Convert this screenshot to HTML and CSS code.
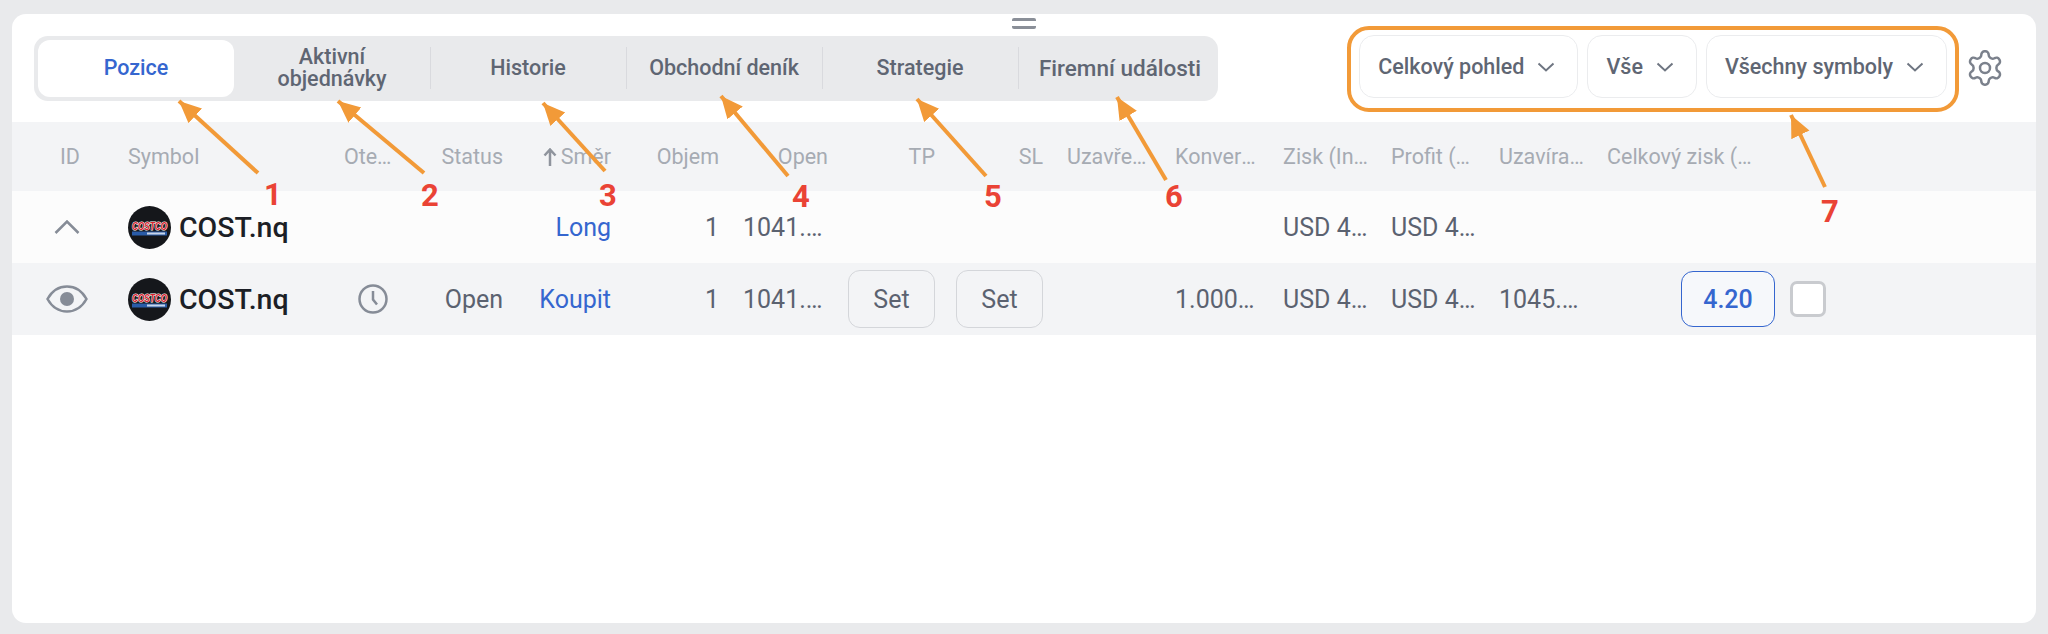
FILE: index.html
```html
<!DOCTYPE html>
<html lang="en">
<head>
    <meta charset="UTF-8">
    <meta name="viewport" content="width=device-width, initial-scale=1.0">
    <title>Pozice</title>
    <link rel="stylesheet" href="styles.css">
</head>
<body>

<svg class="defs" width="0" height="0">
    <symbol id="costco" viewBox="0 0 43 43">
        <circle cx="21.5" cy="21.5" r="21.5" fill="#15171b"/>
        <rect x="4" y="25.500" width="35" height="4" fill="#2a5ca8"/>
        <rect x="19" y="26.500" width="18" height="2" fill="#c9d5e8"/>
        <text x="21.5" y="23.500" textLength="35" lengthAdjust="spacingAndGlyphs" class="logo-text">COSTCO</text>
    </symbol>
</svg>

<div class="card">
    <!-- Drag handle -->
    <div class="handle"></div>

    <div class="toolbar">
        <div class="tabs">
            <div class="tab active">Pozice</div>
            <div class="tab">Aktivní objednávky</div>
            <div class="tab">Historie</div>
            <div class="tab">Obchodní deník</div>
            <div class="tab">Strategie</div>
            <div class="tab">Firemní události</div>
        </div>

        <div class="filters">
            <div class="dropdown">Celkový pohled
                <svg class="chevron" viewBox="0 0 18 10"><path d="M1.5 1.5 9 8.5l7.5-7"/></svg>
            </div>
            <div class="dropdown">Vše
                <svg class="chevron" viewBox="0 0 18 10"><path d="M1.5 1.5 9 8.5l7.5-7"/></svg>
            </div>
            <div class="dropdown">Všechny symboly
                <svg class="chevron" viewBox="0 0 18 10"><path d="M1.5 1.5 9 8.5l7.5-7"/></svg>
            </div>
        </div>

        <svg class="gear" viewBox="0 0 24 24">
            <path d="M12.22 2h-.44a2 2 0 0 0-2 2v.18a2 2 0 0 1-1 1.73l-.43.25a2 2 0 0 1-2 0l-.15-.08a2 2 0 0 0-2.73.73l-.22.38a2 2 0 0 0 .73 2.73l.15.1a2 2 0 0 1 1 1.72v.51a2 2 0 0 1-1 1.74l-.15.09a2 2 0 0 0-.73 2.73l.22.38a2 2 0 0 0 2.73.73l.15-.08a2 2 0 0 1 2 0l.43.25a2 2 0 0 1 1 1.73V20a2 2 0 0 0 2 2h.44a2 2 0 0 0 2-2v-.18a2 2 0 0 1 1-1.73l.43-.25a2 2 0 0 1 2 0l.15.08a2 2 0 0 0 2.73-.73l.22-.39a2 2 0 0 0-.73-2.73l-.15-.08a2 2 0 0 1-1-1.74v-.5a2 2 0 0 1 1-1.74l.15-.09a2 2 0 0 0 .73-2.73l-.22-.38a2 2 0 0 0-2.73-.73l-.15.08a2 2 0 0 1-2 0l-.43-.25a2 2 0 0 1-1-1.73V4a2 2 0 0 0-2-2z"/>
            <circle cx="12" cy="12" r="3"/>
        </svg>
    </div>

    <div class="row head">
        <div class="cell center id-head">ID</div>
        <div class="cell">Symbol</div>
        <div class="cell">Otevřeno</div>
        <div class="cell right">Status</div>
        <div class="cell right sort">
            <svg class="sort-arrow" viewBox="0 0 14 18"><path d="M7 18V2M1.5 7.5 7 1.5l5.500 6"/></svg>Směr
        </div>
        <div class="cell right">Objem</div>
        <div class="cell right open-head">Open</div>
        <div class="cell right">TP</div>
        <div class="cell right">SL</div>
        <div class="cell">Uzavřeno</div>
        <div class="cell">Konverze</div>
        <div class="cell">Zisk (Instrument)</div>
        <div class="cell">Profit (USD)</div>
        <div class="cell">Uzavírací cena</div>
        <div class="cell total-head">Celkový zisk (USD)</div>
    </div>

    <div class="row parent">
        <div class="cell center">
            <svg class="toggle" viewBox="0 0 26 14"><path d="M1.500 13 13 1.500 24.500 13"/></svg>
        </div>
        <div class="cell symbol">
            <svg class="logo"><use href="#costco"/></svg>COST.nq
        </div>
        <div class="cell"></div>
        <div class="cell"></div>
        <div class="cell right blue">Long</div>
        <div class="cell right">1</div>
        <div class="cell">1041.35</div>
        <div class="cell"></div>
        <div class="cell"></div>
        <div class="cell"></div>
        <div class="cell"></div>
        <div class="cell">USD 4.20</div>
        <div class="cell">USD 4.20</div>
        <div class="cell"></div>
        <div class="cell"></div>
    </div>

    <div class="row child">
        <div class="cell center">
            <svg class="eye" viewBox="0 0 42 28">
                <path d="M1.500 14C6 6 13 1.500 21 1.500S36 6 40.500 14C36 22 29 26.500 21 26.500S6 22 1.500 14z"/>
                <circle class="pupil" cx="21" cy="14" r="7"/>
            </svg>
        </div>
        <div class="cell symbol">
            <svg class="logo"><use href="#costco"/></svg>COST.nq
        </div>
        <div class="cell center clock-cell">
            <svg class="clock" viewBox="0 0 30 30">
                <circle cx="15" cy="15" r="13.500"/>
                <path d="M15 7v8.500l4 5"/>
            </svg>
        </div>
        <div class="cell right">Open</div>
        <div class="cell right blue">Koupit</div>
        <div class="cell right">1</div>
        <div class="cell">1041.35</div>
        <div class="cell btn-cell"><button class="set">Set</button></div>
        <div class="cell btn-cell"><button class="set">Set</button></div>
        <div class="cell"></div>
        <div class="cell">1.00000</div>
        <div class="cell">USD 4.20</div>
        <div class="cell">USD 4.20</div>
        <div class="cell">1045.55</div>
        <div class="cell total-cell">
            <button class="total">4.20</button>
            <span class="checkbox"></span>
        </div>
    </div>
</div>

<!-- Annotations drawn on top of the screenshot -->
<svg class="notes" viewBox="0 0 2048 634">
    <defs>
        <marker id="tip" markerUnits="userSpaceOnUse" markerWidth="26" markerHeight="26" refX="22" refY="10" orient="auto">
            <path d="M0 0 22 10 0 20z" fill="#f29a38"/>
        </marker>
    </defs>
    <line x1="258" y1="173" x2="179" y2="101" marker-end="url(#tip)"/>
    <line x1="424" y1="173" x2="338" y2="101" marker-end="url(#tip)"/>
    <line x1="605" y1="171" x2="543" y2="103" marker-end="url(#tip)"/>
    <line x1="788" y1="176" x2="721" y2="96" marker-end="url(#tip)"/>
    <line x1="986" y1="176" x2="917" y2="99" marker-end="url(#tip)"/>
    <line x1="1166" y1="180" x2="1117" y2="97" marker-end="url(#tip)"/>
    <line x1="1825" y1="187" x2="1791" y2="115" marker-end="url(#tip)"/>
    <text x="273" y="205">1</text>
    <text x="430" y="206">2</text>
    <text x="608" y="206">3</text>
    <text x="801" y="207">4</text>
    <text x="993" y="207">5</text>
    <text x="1174" y="207">6</text>
    <text x="1830" y="222">7</text>
</svg>

</body>
</html>
```

FILE: styles.css
```css
* {
    box-sizing: border-box;
}

body {
    margin: 0;
    height: 634px;
    padding: 14px 12px 11px;
    background-color: #e9eaec;
    font-family: "Roboto", "Liberation Sans", sans-serif;
    overflow: hidden;
}

.defs {
    position: absolute;
}

.logo-text {
    font-family: "Liberation Sans", sans-serif;
    font-size: 10.500px;
    font-weight: 700;
    font-style: italic;
    text-anchor: middle;
    fill: #d8232f;
    stroke: #fff;
    stroke-width: 1.200px;
    paint-order: stroke;
}

.card {
    position: relative;
    height: 609px;
    background-color: #fff;
    border-radius: 14px;
    overflow: hidden;
}

.handle {
    position: absolute;
    top: 4px;
    left: 1000px;
    width: 24px;
    height: 11px;
    border-top: 3px solid #8a8f98;
    border-bottom: 3px solid #8a8f98;
    border-radius: 2px;
}

/* Toolbar */
.toolbar {
    display: flex;
    align-items: center;
    height: 108px;
    padding: 0 31px 0 22px;
}

.tabs {
    display: flex;
    align-items: center;
    padding: 4px;
    margin-right: auto;
    background-color: #e9eaec;
    border-radius: 14px;
}

.tab {
    position: relative;
    display: flex;
    align-items: center;
    justify-content: center;
    width: 196px;
    height: 57px;
    padding: 0 20px;
    color: #5f6673;
    font-size: 21.500px;
    font-weight: 500;
    line-height: 22px;
    text-align: center;
}

.tab + .tab::before {
    content: "";
    position: absolute;
    left: 0;
    top: 7px;
    bottom: 8px;
    width: 1px;
    background-color: #d9dade;
}

.tab:nth-child(2)::before {
    display: none;
}

.tab:last-child {
    padding: 0 1px 0 9px;
    font-size: 22.500px;
}

.tab.active {
    background-color: #fff;
    border-radius: 12px;
    color: #3566cf;
}

.filters {
    display: flex;
    gap: 9px;
    padding: 5px 8px 10px;
    margin-top: 2px;
    border: 4px solid #f29a38;
    border-radius: 22px;
}

.dropdown {
    display: flex;
    align-items: center;
    gap: 13px;
    height: 63px;
    padding: 0 22px 0 18px;
    border: 1px solid #ebecee;
    border-radius: 15px;
    color: #5f6673;
    font-size: 21.500px;
    font-weight: 500;
    white-space: nowrap;
}

.chevron {
    width: 18px;
    height: 10px;
    fill: none;
    stroke: #6f7682;
    stroke-width: 2;
}

.gear {
    width: 40px;
    height: 40px;
    margin-left: 6px;
    fill: none;
    stroke: #7b818c;
    stroke-width: 1.500;
}

/* Table */
.row {
    display: grid;
    grid-template-columns: 104px 216px 72px 111px repeat(10, 108px) 1fr;
    align-items: center;
    height: 72px;
    color: #5b6270;
    font-size: 25px;
}

.row.head {
    height: 69px;
    background-color: #f3f4f6;
    color: #a6abb3;
    font-size: 21.500px;
}

.row.parent {
    background-color: #fcfcfc;
}

.row.child {
    background-color: #f3f4f6;
}

.cell {
    padding: 0 8px 0 12px;
    white-space: nowrap;
    overflow: hidden;
    text-overflow: ellipsis;
}

.center {
    display: flex;
    justify-content: center;
    padding-right: 12px;
}

.cell:first-child {
    padding-left: 18px;
}

.cell.id-head {
    padding-left: 24px;
}

.clock-cell {
    padding-left: 22px;
}

.right {
    padding-right: 12px;
    text-align: right;
}

.open-head {
    padding-right: 11px;
}

.total-head {
    max-width: 172px;
}

.blue {
    color: #3566cf;
}

.sort {
    display: flex;
    align-items: center;
    justify-content: flex-end;
    gap: 4px;
}

.sort-arrow {
    width: 14px;
    height: 18px;
    flex-shrink: 0;
    fill: none;
    stroke: #8f949d;
    stroke-width: 2.500;
}

.symbol {
    display: flex;
    align-items: center;
    gap: 8px;
    color: #1c1f26;
    font-size: 28.500px;
    font-weight: 500;
}

.logo {
    width: 43px;
    height: 43px;
    flex-shrink: 0;
}

.toggle {
    width: 26px;
    height: 14px;
    fill: none;
    stroke: #868c97;
    stroke-width: 2.500;
}

.eye {
    width: 42px;
    height: 28px;
    fill: none;
    stroke: #868c97;
    stroke-width: 2.500;
}

.pupil {
    fill: #868c97;
    stroke: none;
}

.clock {
    width: 30px;
    height: 30px;
    fill: none;
    stroke: #868c97;
    stroke-width: 2.500;
}

.btn-cell {
    display: flex;
    justify-content: flex-end;
    padding-right: 12px;
}

.set {
    flex-shrink: 0;
    width: 87px;
    height: 58px;
    background-color: #f3f4f6;
    border: 1px solid #d4d6da;
    border-radius: 12px;
    color: #5b6270;
    font-family: inherit;
    font-size: 25px;
}

.total-cell {
    display: flex;
    align-items: center;
    gap: 15px;
    padding-left: 86px;
    overflow: visible;
}

.total {
    width: 94px;
    height: 56px;
    flex-shrink: 0;
    background-color: #f6f8fb;
    border: 1px solid #3566cf;
    border-radius: 12px;
    color: #3566cf;
    font-family: inherit;
    font-size: 25px;
    font-weight: 500;
}

.checkbox {
    width: 36px;
    height: 36px;
    flex-shrink: 0;
    background-color: #fff;
    border: 3px solid #c9cbcf;
    border-radius: 7px;
}

/* Annotations */
.notes {
    position: absolute;
    top: 0;
    left: 0;
    width: 2048px;
    height: 634px;
    pointer-events: none;
}

.notes line {
    stroke: #f29a38;
    stroke-width: 4;
}

.notes text {
    fill: #ea4335;
    font-family: "Roboto", sans-serif;
    font-size: 31px;
    font-weight: 700;
    text-anchor: middle;
}
```
